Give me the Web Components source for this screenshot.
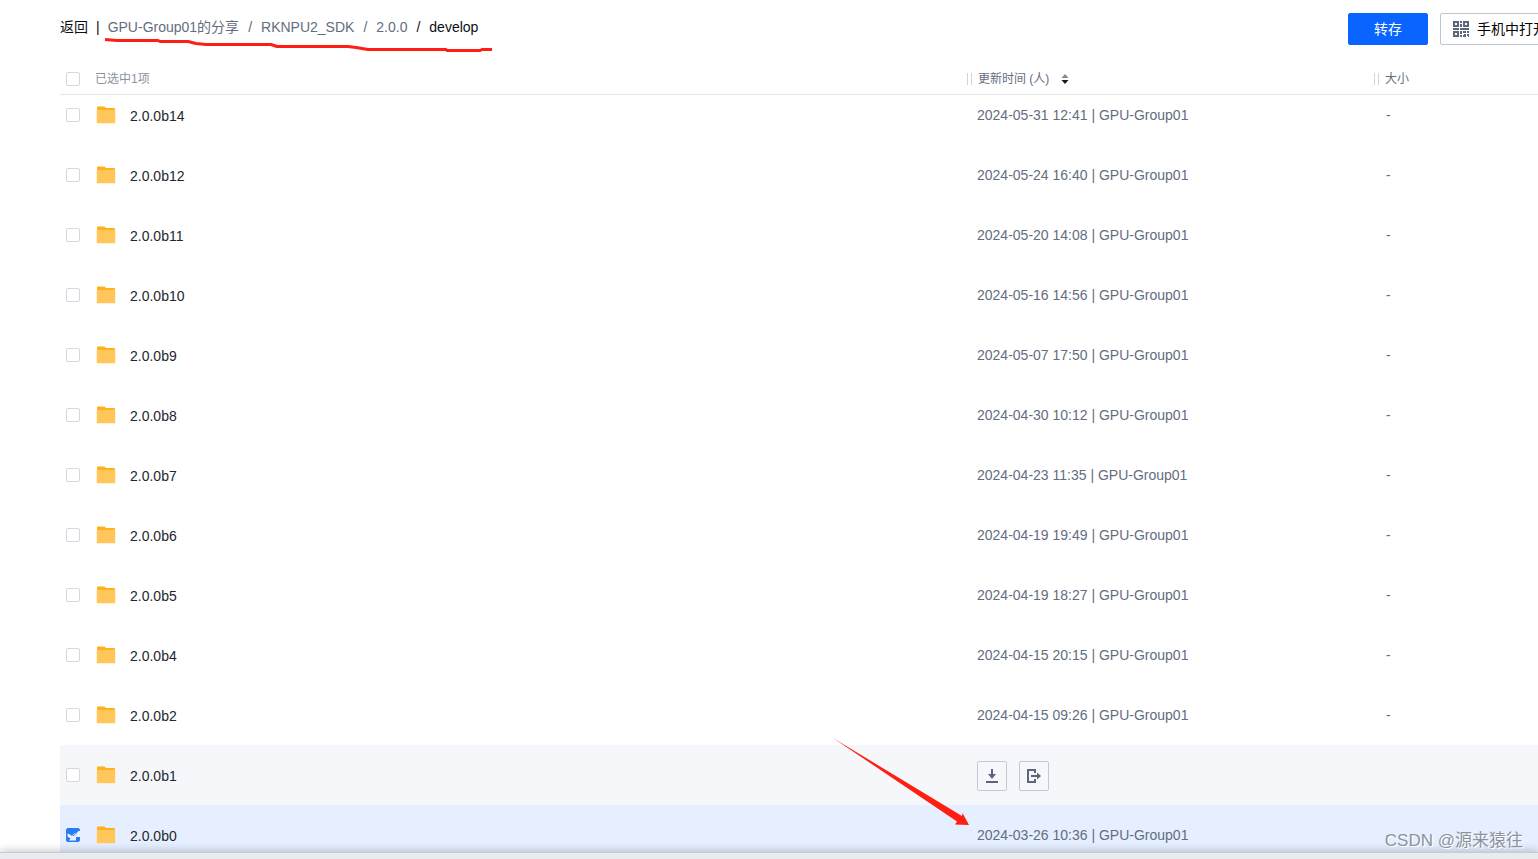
<!DOCTYPE html>
<html lang="zh-CN">
<head>
<meta charset="utf-8">
<title>RKNPU2_SDK</title>
<style>
    html, body {
        height: 100%;
        margin: 0;
        overflow: hidden;
    }
    body {
        background: #fff;
        color: #25262b;
        font: 14px/20px "Liberation Sans", "Noto Sans CJK SC", sans-serif;
    }
</style>
</head>
<body>
<share-page>
    <share-toolbar slot="toolbar">
        <crumb-trail slot="left"></crumb-trail>
        <action-button slot="right" variant="primary">转存</action-button>
        <action-button slot="right"><ui-icon name="qr" slot="icon"></ui-icon>手机中打开</action-button>
    </share-toolbar>
    <file-table slot="list"></file-table>
    <pen-marks slot="overlay"></pen-marks>
    <water-mark slot="overlay">CSDN @源来猿往</water-mark>
</share-page>

<script>
const icons = {
    folder: {
        width: 20,
        height: 18,
        body: `<path fill="#ffb01f" d="M1 1.5Q1 .5 2 .5H8.5L10 2H18Q19 2 19 3V8H1Z"/>
            <rect x=".5" y="4" width="19" height="13.5" rx="1" fill="#ffe3ab"/>
            <rect x="1" y="4" width="18" height="13" rx="1" fill="#ffc65c"/>`
    },
    qr: {
        width: 16,
        height: 16,
        body: `<g fill="none" stroke="#5b667a" stroke-width="2">
            <path d="M1 1H5V5H1ZM11 1H15V5H11ZM1 11H5V15H1Z"/>
            <path d="M8 0V2M8 3V6M0 8H6M7 8H16M8 10V13M8 14V16M10 11H13M15 10V12M10 15H12V13M14 14H16V16"/>
            </g>`
    },
    download: {
        width: 14,
        height: 14,
        body: `<path fill="#5b667a" d="M6 0H8V5H11L7 10L3 5H6ZM1 12H13V14H1Z"/>`
    },
    transfer: {
        width: 14,
        height: 14,
        body: `<path fill="none" stroke="#5b667a" stroke-width="2" d="M8 4V1H1V13H8V10M4 7H11"/>
            <path fill="#5b667a" d="M10 3.5L14 7L10 10.5Z"/>`
    },
    sort: {
        width: 8,
        height: 10,
        body: `<path fill="#818999" d="M4 0L7.5 4H.5Z"/><path fill="#16181d" d="M4 10L.5 6H7.5Z"/>`
    }
};

const files = [
    { name: '2.0.0b14', time: '2024-05-31 12:41' },
    { name: '2.0.0b12', time: '2024-05-24 16:40' },
    { name: '2.0.0b11', time: '2024-05-20 14:08' },
    { name: '2.0.0b10', time: '2024-05-16 14:56' },
    { name: '2.0.0b9', time: '2024-05-07 17:50' },
    { name: '2.0.0b8', time: '2024-04-30 10:12' },
    { name: '2.0.0b7', time: '2024-04-23 11:35' },
    { name: '2.0.0b6', time: '2024-04-19 19:49' },
    { name: '2.0.0b5', time: '2024-04-19 18:27' },
    { name: '2.0.0b4', time: '2024-04-15 20:15' },
    { name: '2.0.0b2', time: '2024-04-15 09:26' },
    { name: '2.0.0b1', state: 'hover' },
    { name: '2.0.0b0', time: '2024-03-26 10:36', state: 'selected' }
];

class UiIcon extends HTMLElement {
    constructor() {
        super();
        this.attachShadow({ mode: 'open' });
    }

    connectedCallback() {
        const icon = icons[this.getAttribute('name')];
        this.shadowRoot.innerHTML = `
            <style>
                :host {
                    display: inline-flex;
                    flex: none;
                }
                svg {
                    display: block;
                }
            </style>
            <svg width="${icon.width}" height="${icon.height}" viewBox="0 0 ${icon.width} ${icon.height}" aria-hidden="true">${icon.body}</svg>
        `;
    }
}

class CheckBox extends HTMLElement {
    constructor() {
        super();
        this.attachShadow({ mode: 'open' });
    }

    connectedCallback() {
        this.shadowRoot.innerHTML = `
            <style>
                :host {
                    display: inline-grid;
                    flex: none;
                }
                input, svg {
                    grid-area: 1 / 1;
                    width: 14px;
                    height: 14px;
                }
                input {
                    appearance: none;
                    box-sizing: border-box;
                    margin: 0;
                    border: 1px solid #d4d7de;
                    border-radius: 2px;
                    background: #fff;
                }
                input:checked {
                    border-color: #2a7bf6;
                    background: #2a7bf6;
                }
                svg {
                    display: none;
                    pointer-events: none;
                }
                input:checked + svg {
                    display: block;
                }
            </style>
            <input type="checkbox" aria-label="${this.getAttribute('label')}" ${this.hasAttribute('checked') ? 'checked' : ''}>
            <svg viewBox="0 0 14 14" aria-hidden="true">
                <path fill="#e9f1ff" d="M1.5 5.5L4 6.5L6 8L8 5.5L11 4.5L12.5 3H14V9H10V12.5H3L4.5 10.5L1.5 8.5Z"/>
                <path fill="none" stroke="#2a7bf6" d="M7 8L11 4.5"/>
            </svg>
        `;
    }
}

class ActionButton extends HTMLElement {
    constructor() {
        super();
        this.attachShadow({ mode: 'open' });
        this.shadowRoot.innerHTML = `
            <style>
                :host {
                    display: block;
                }
                button {
                    display: flex;
                    align-items: center;
                    justify-content: center;
                    gap: 8px;
                    box-sizing: border-box;
                    min-width: 80px;
                    height: 32px;
                    padding: 0 12px;
                    border: 1px solid #bfc4cf;
                    border-radius: 2px;
                    background: #fff;
                    color: #000;
                    font: inherit;
                    white-space: nowrap;
                }
                :host([variant="primary"]) button {
                    border-color: #0a64ff;
                    background: #0a64ff;
                    color: #fff;
                }
            </style>
            <button type="button"><slot name="icon"></slot><slot></slot></button>
        `;
    }
}

class CrumbTrail extends HTMLElement {
    constructor() {
        super();
        this.attachShadow({ mode: 'open' });
        this.shadowRoot.innerHTML = `
            <style>
                :host {
                    display: flex;
                    gap: 8px;
                    color: #0d0e12;
                    line-height: 28px;
                    white-space: nowrap;
                }
                nav {
                    display: flex;
                    gap: 9px;
                }
                a {
                    color: inherit;
                    text-decoration: none;
                }
                nav a, .sep {
                    color: #636d7e;
                }
            </style>
            <a href="#">返回</a><span>|</span>
            <nav aria-label="路径">
                <a href="#">GPU-Group01的分享</a><span class="sep">/</span>
                <a href="#">RKNPU2_SDK</a><span class="sep">/</span>
                <a href="#">2.0.0</a><span>/</span>
                <span aria-current="page">develop</span>
            </nav>
        `;
    }
}

class ShareToolbar extends HTMLElement {
    constructor() {
        super();
        this.attachShadow({ mode: 'open' });
        this.shadowRoot.innerHTML = `
            <style>
                :host {
                    display: flex;
                    justify-content: space-between;
                    align-items: flex-start;
                    padding: 13px 0 19px;
                }
                .right {
                    display: flex;
                    gap: 12px;
                }
            </style>
            <slot name="left"></slot>
            <div class="right"><slot name="right"></slot></div>
        `;
    }
}

class FileTable extends HTMLElement {
    constructor() {
        super();
        this.attachShadow({ mode: 'open' });
        this.shadowRoot.innerHTML = `
            <style>
                :host {
                    display: block;
                }
                table {
                    width: 100%;
                    border-collapse: separate;
                    border-spacing: 0;
                    table-layout: fixed;
                }
                .time {
                    width: 407px;
                }
                .size {
                    width: 187px;
                }
                th {
                    height: 30px;
                    padding: 0;
                    border-bottom: 1px solid #e6e7ea;
                    color: #636d7e;
                    font-size: 12px;
                    font-weight: 400;
                    text-align: left;
                }
                .cell {
                    display: flex;
                    align-items: center;
                }
                th .cell {
                    gap: 6px;
                    padding-left: 1px;
                }
                th .pick {
                    gap: 15px;
                    padding-left: 6px;
                    color: #8b93a1;
                }
                .grip {
                    width: 3px;
                    height: 12px;
                    border: solid #cdd3df;
                    border-width: 0 1px;
                }
                td {
                    height: 60px;
                    padding: 0;
                    color: #636d7e;
                }
                /* the list is scrolled a little way under its header */
                tr:first-child td {
                    box-sizing: border-box;
                    height: 50px;
                    padding-bottom: 10px;
                }
                .name {
                    gap: 16px;
                    padding-left: 6px;
                    color: #25262b;
                }
                .name ui-icon {
                    margin-right: -2px;
                }
                .name span, .tools {
                    margin-top: 2px;
                }
                td.when {
                    padding-left: 11px;
                }
                td.bytes {
                    padding-left: 13px;
                }
                .hover td {
                    background: #f5f7fb;
                }
                .selected td {
                    background: #e5efff;
                }
                .tools {
                    gap: 12px;
                }
                .tools button {
                    display: grid;
                    place-items: center;
                    width: 30px;
                    height: 30px;
                    padding: 0;
                    border: 1px solid #c3c9d6;
                    border-radius: 2px;
                    background: none;
                }
                .sort {
                    display: flex;
                    margin-left: 6px;
                    padding: 0;
                    border: 0;
                    background: none;
                }
            </style>
            <table>
                <colgroup><col><col class="time"><col class="size"></colgroup>
                <thead>
                    <tr>
                        <th><div class="cell pick"><check-box label="全选"></check-box>已选中1项</div></th>
                        <th><div class="cell"><i class="grip"></i><span>更新时间 (人)</span><button class="sort" type="button" aria-label="排序"><ui-icon name="sort"></ui-icon></button></div></th>
                        <th><div class="cell"><i class="grip"></i><span>大小</span></div></th>
                    </tr>
                </thead>
                <tbody>${files.map((file) => this.row(file)).join('')}</tbody>
            </table>
        `;
    }

    row({ name, time, state = '' }) {
        const tools = `
            <div class="cell tools">
                <button type="button" aria-label="下载"><ui-icon name="download"></ui-icon></button>
                <button type="button" aria-label="转存"><ui-icon name="transfer"></ui-icon></button>
            </div>`;
        return `
            <tr class="${state}">
                <td><div class="cell name"><check-box label="${name}" ${state === 'selected' ? 'checked' : ''}></check-box><ui-icon name="folder"></ui-icon><span>${name}</span></div></td>
                <td class="when">${time ? `${time} | GPU-Group01` : tools}</td>
                <td class="bytes">${time ? '-' : ''}</td>
            </tr>`;
    }
}

class PenMarks extends HTMLElement {
    constructor() {
        super();
        this.attachShadow({ mode: 'open' });
        this.shadowRoot.innerHTML = `
            <style>
                :host {
                    position: absolute;
                    top: 0;
                    left: 0;
                    pointer-events: none;
                }
                svg {
                    display: block;
                }
            </style>
            <svg width="1000" height="840" viewBox="0 0 1000 840" aria-hidden="true">
                <path fill="none" stroke="#ff1f12" stroke-width="3" stroke-linejoin="round" d="M105 39.5L117 40.5H158L160 41.5H188L196 43.5L206 44.5H271L277 46.5H348L356 47.5L368 49.5H446L447 50.5H480L482 49.5H492"/>
                <path fill="#ff1f12" d="M833 738L962 816L962.5 813L969 825L955 824.5L957 821.5Z"/>
            </svg>
        `;
    }
}

class WaterMark extends HTMLElement {
    constructor() {
        super();
        this.attachShadow({ mode: 'open' });
        this.shadowRoot.innerHTML = `
            <style>
                :host {
                    position: absolute;
                    right: 15px;
                    bottom: 8px;
                    color: #8d939e;
                    font-size: 17px;
                    text-shadow: 1px 1px 0 #fff;
                    pointer-events: none;
                }
            </style>
            <slot></slot>
        `;
    }
}

class SharePage extends HTMLElement {
    constructor() {
        super();
        this.attachShadow({ mode: 'open' });
        this.shadowRoot.innerHTML = `
            <style>
                :host {
                    position: relative;
                    display: flex;
                    flex-direction: column;
                    height: 100%;
                    overflow: hidden;
                }
                /* runs past the right edge of the window */
                main {
                    flex: 1;
                    min-height: 0;
                    margin: 0 -22px 0 60px;
                }
                footer {
                    position: relative;
                    flex: none;
                    height: 6px;
                    border-top: 1px solid #c9cbd0;
                    background: #e8ebef;
                    box-shadow: 0 -1px 8px rgba(0, 0, 0, 0.25);
                }
            </style>
            <main>
                <slot name="toolbar"></slot>
                <slot name="list"></slot>
            </main>
            <footer></footer>
            <slot name="overlay"></slot>
        `;
    }
}

customElements.define('ui-icon', UiIcon);
customElements.define('check-box', CheckBox);
customElements.define('action-button', ActionButton);
customElements.define('crumb-trail', CrumbTrail);
customElements.define('share-toolbar', ShareToolbar);
customElements.define('file-table', FileTable);
customElements.define('pen-marks', PenMarks);
customElements.define('water-mark', WaterMark);
customElements.define('share-page', SharePage);
</script>
</body>
</html>
